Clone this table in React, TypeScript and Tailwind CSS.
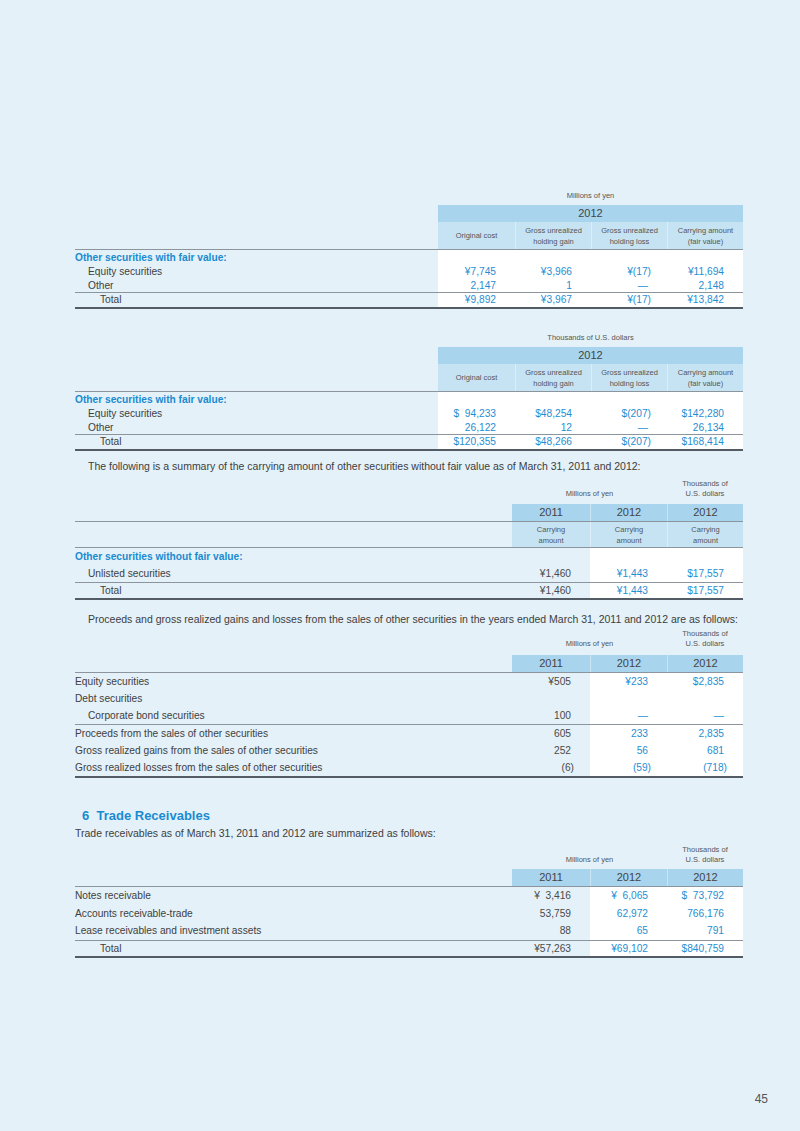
import React from "react";

const G4 = "grid grid-cols-[363px_77px_76px_76px_76px]";
const G3 = "grid grid-cols-[437px_78px_77px_76px]";

const BLUE = "text-[#1f8ed3]";
const GRAY = "text-[#4a4a4a]";
const SP = "\u2007";

function Thin() {
  return <div className="h-px bg-[#8c959d]" />;
}

function Thick() {
  return <div className="h-[2px] bg-[#535c65]" />;
}

function Num({ v, blue }: { v: string; blue?: boolean }) {
  const hang = v.endsWith(")");
  return (
    <span className={`${blue ? BLUE : GRAY} ${hang ? "-mr-[3px]" : ""}`}>
      {v}
    </span>
  );
}

interface RowProps {
  grid: string;
  label: string;
  pad?: string;
  values: string[];
  blueFrom: number;
  whiteFrom: number;
  h: string;
  heading?: boolean;
}

function Row({ grid, label, pad = "pl-0", values, blueFrom, whiteFrom, h, heading }: RowProps) {
  return (
    <div className={grid}>
      <div
        className={`flex items-center ${h} ${pad} ${
          heading ? "font-bold text-[#1a8bd0]" : "text-[#404040]"
        }`}
      >
        {label}
      </div>
      {values.map((v, i) => (
        <div
          key={i}
          className={`flex items-center justify-end pr-[19px] ${h} ${i >= whiteFrom ? "bg-white" : ""}`}
        >
          <Num v={v} blue={i >= blueFrom} />
        </div>
      ))}
    </div>
  );
}

// table with 4 data columns (2012 only)
function FairValueTable({ unit, rows }: { unit: string; rows: string[][] }) {
  const subs = [
    ["Original cost"],
    ["Gross unrealized", "holding gain"],
    ["Gross unrealized", "holding loss"],
    ["Carrying amount", "(fair value)"],
  ];
  return (
    <div>
      <div className={G4}>
        <div />
        <div className="col-span-4 text-center text-[7.5px] leading-[12px] text-[#555]">{unit}</div>
      </div>
      <div className={`${G4} mt-[3px]`}>
        <div />
        <div className="col-span-4 h-[17px] bg-[#a8d4ee] text-center text-[11px] leading-[17px] text-[#444]">
          2012
        </div>
      </div>
      <div className={G4}>
        <div />
        {subs.map((s, i) => (
          <div
            key={i}
            className={`flex h-[27px] flex-col items-center justify-center bg-[#c6e3f4] text-center text-[7.5px] leading-[11px] text-[#555] ${
              i > 0 ? "border-l border-white/40" : ""
            }`}
          >
            {s.map((l) => (
              <span key={l}>{l}</span>
            ))}
          </div>
        ))}
      </div>
      <Thin />
      <Row grid={G4} label="Other securities with fair value:" values={["", "", "", ""]} blueFrom={0} whiteFrom={0} h="h-[15px]" heading />
      <Row grid={G4} label="Equity securities" pad="pl-[13px]" values={rows[0]} blueFrom={0} whiteFrom={0} h="h-[14px]" />
      <Row grid={G4} label="Other" pad="pl-[13px]" values={rows[1]} blueFrom={0} whiteFrom={0} h="h-[13px]" />
      <Thin />
      <Row grid={G4} label="Total" pad="pl-[25px]" values={rows[2]} blueFrom={0} whiteFrom={0} h="h-[14px]" />
      <Thick />
    </div>
  );
}

function UnitHeader() {
  return (
    <div className={`${G3} text-[7.5px] leading-[10px] text-[#555]`}>
      <div />
      <div className="col-span-2 flex items-end justify-center">Millions of yen</div>
      <div className="flex flex-col items-center">
        <span>Thousands of</span>
        <span>U.S. dollars</span>
      </div>
    </div>
  );
}

function YearBand({ mt }: { mt: string }) {
  return (
    <div className={`${G3} ${mt}`}>
      <div />
      {["2011", "2012", "2012"].map((y, i) => (
        <div
          key={i}
          className={`h-[17px] bg-[#a8d4ee] text-center text-[11px] leading-[17px] text-[#444] ${
            i > 0 ? "border-l border-white/40" : ""
          }`}
        >
          {y}
        </div>
      ))}
    </div>
  );
}

export default function App() {
  return (
    <div className="flex h-[1131px] w-[800px] flex-col bg-[#e4f1f9] font-['Liberation_Sans',Arial,sans-serif] text-[10.2px]">
      <div className="ml-[75px] w-[668px] pt-[190px]">
        <FairValueTable
          unit="Millions of yen"
          rows={[
            ["¥7,745", "¥3,966", "¥(17)", "¥11,694"],
            ["2,147", "1", "—", "2,148"],
            ["¥9,892", "¥3,967", "¥(17)", "¥13,842"],
          ]}
        />
        <div className="mt-[23px]">
          <FairValueTable
            unit="Thousands of U.S. dollars"
            rows={[
              [`$${SP}94,233`, "$48,254", "$(207)", "$142,280"],
              ["26,122", "12", "—", "26,134"],
              ["$120,355", "$48,266", "$(207)", "$168,414"],
            ]}
          />
        </div>

        <p className="mt-[8px] pl-[13px] text-[10.5px] leading-[14px] text-[#3d3d3d]">
          The following is a summary of the carrying amount of other securities without fair value as of March 31, 2011 and 2012:
        </p>

        {/* without fair value */}
        <div className="mt-[6px]">
          <UnitHeader />
          <YearBand mt="mt-[5px]" />
          <Thin />
          <div className={G3}>
            <div />
            {[0, 1, 2].map((i) => (
              <div
                key={i}
                className={`flex h-[25px] flex-col items-center justify-center bg-[#c6e3f4] text-[7.5px] leading-[11px] text-[#555] ${
                  i > 0 ? "border-l border-white/40" : ""
                }`}
              >
                <span>Carrying</span>
                <span>amount</span>
              </div>
            ))}
          </div>
          <Thin />
          <Row grid={G3} label="Other securities without fair value:" values={["", "", ""]} blueFrom={1} whiteFrom={1} h="h-[18px]" heading />
          <Row grid={G3} label="Unlisted securities" pad="pl-[13px]" values={["¥1,460", "¥1,443", "$17,557"]} blueFrom={1} whiteFrom={1} h="h-[16px]" />
          <Thin />
          <Row grid={G3} label="Total" pad="pl-[25px]" values={["¥1,460", "¥1,443", "$17,557"]} blueFrom={1} whiteFrom={1} h="h-[15px]" />
          <Thick />
        </div>

        <p className="mt-[12px] pl-[13px] text-[10.5px] leading-[14px] text-[#3d3d3d]">
          Proceeds and gross realized gains and losses from the sales of other securities in the years ended March 31, 2011 and 2012 are as follows:
        </p>

        {/* sales */}
        <div className="mt-[3px]">
          <UnitHeader />
          <YearBand mt="mt-[6px]" />
          <Thin />
          <Row grid={G3} label="Equity securities" values={["¥505", "¥233", "$2,835"]} blueFrom={1} whiteFrom={1} h="h-[17px]" />
          <Row grid={G3} label="Debt securities" values={["", "", ""]} blueFrom={1} whiteFrom={1} h="h-[17px]" />
          <Row grid={G3} label="Corporate bond securities" pad="pl-[13px]" values={["100", "—", "—"]} blueFrom={1} whiteFrom={1} h="h-[17px]" />
          <Thin />
          <Row grid={G3} label="Proceeds from the sales of other securities" values={["605", "233", "2,835"]} blueFrom={1} whiteFrom={1} h="h-[17px]" />
          <Row grid={G3} label="Gross realized gains from the sales of other securities" values={["252", "56", "681"]} blueFrom={1} whiteFrom={1} h="h-[17px]" />
          <Row grid={G3} label="Gross realized losses from the sales of other securities" values={["(6)", "(59)", "(718)"]} blueFrom={1} whiteFrom={1} h="h-[17px]" />
          <Thick />
        </div>

        <h2 className="mt-[29px] pl-[7px] text-[13px] font-bold leading-[18px] text-[#1a8bd0]">
          6&nbsp; Trade Receivables
        </h2>
        <p className="mt-px text-[10.5px] leading-[14px] text-[#3d3d3d]">
          Trade receivables as of March 31, 2011 and 2012 are summarized as follows:
        </p>

        {/* trade receivables */}
        <div className="mt-[5px]">
          <UnitHeader />
          <YearBand mt="mt-[4px]" />
          <Thin />
          <Row grid={G3} label="Notes receivable" values={[`¥${SP}3,416`, `¥${SP}6,065`, `$${SP}73,792`]} blueFrom={1} whiteFrom={1} h="h-[18px]" />
          <Row grid={G3} label="Accounts receivable-trade" values={["53,759", "62,972", "766,176"]} blueFrom={1} whiteFrom={1} h="h-[17px]" />
          <Row grid={G3} label="Lease receivables and investment assets" values={["88", "65", "791"]} blueFrom={1} whiteFrom={1} h="h-[18px]" />
          <Thin />
          <Row grid={G3} label="Total" pad="pl-[25px]" values={["¥57,263", "¥69,102", "$840,759"]} blueFrom={1} whiteFrom={1} h="h-[15px]" />
          <Thick />
        </div>
      </div>

      <div className="mt-auto pb-[25px] pr-[32px] text-right text-[12px] leading-[14px] text-[#555]">45</div>
    </div>
  );
}
